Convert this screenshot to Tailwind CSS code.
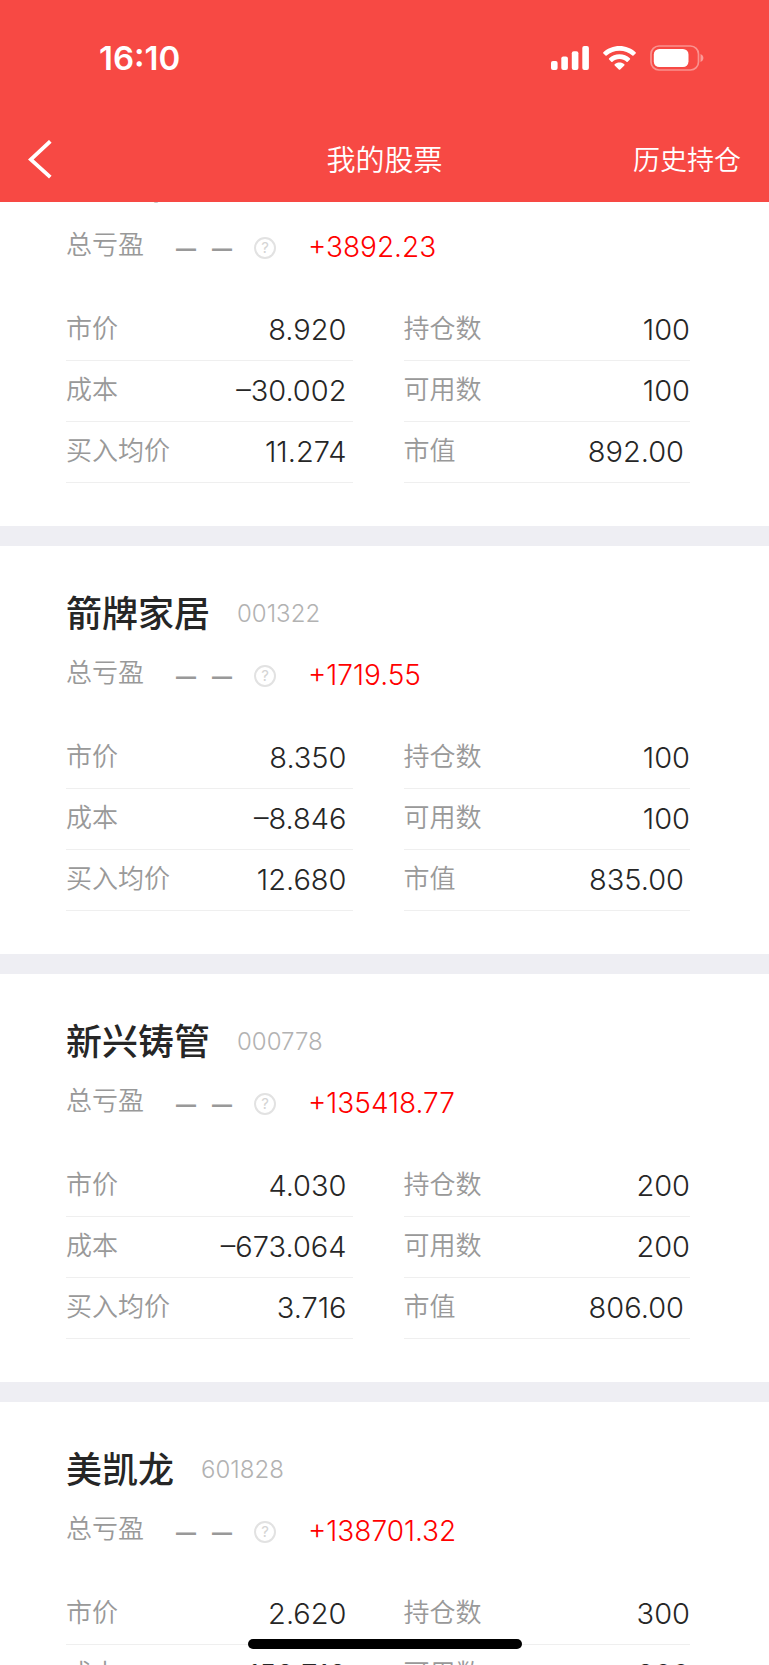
<!DOCTYPE html>
<html lang="zh-CN">
<head>
<meta charset="utf-8">
<meta name="viewport" content="width=device-width, initial-scale=1">
<title>我的股票</title>
<script src="https://cdn.jsdelivr.net/npm/@tailwindcss/browser@4"></script>
</head>
<body class="bg-white font-['Inter','Noto_Sans_CJK_SC',sans-serif] text-[#262626]">
<div class="flex h-screen flex-col overflow-hidden">
  <header class="z-10 shrink-0 bg-[#f74944] text-white">
    <div class="flex h-[116px] items-center justify-between pr-[65px] pl-[99px]">
      <span class="text-[33px] leading-10 font-semibold">16:10</span>
      <div class="flex items-center gap-[14px]">
        <svg class="h-6 w-[38px]" viewBox="0 0 38 24" fill="#fff" aria-label="信号"><rect x="0" y="15" width="6.600" height="9" rx="2"/><rect x="10.300" y="10.500" width="6.600" height="13.500" rx="2"/><rect x="20.800" y="5.200" width="6.600" height="18.800" rx="2"/><rect x="31.300" y="0" width="6.600" height="24" rx="2"/></svg>
        <svg class="h-6 w-[33px]" viewBox="0 0 33 24" fill="#fff" aria-label="无线网络"><path d="M16.500 0C22.700 0 28.300 2.300 32.600 6.200Q33.200 6.900 32.600 7.500L30.500 9.600Q29.900 10.100 29.300 9.600C25.900 6.500 21.400 4.800 16.500 4.800S7.100 6.500 3.700 9.600Q3.100 10.100 2.500 9.600L.4 7.500Q-.2 6.900 .4 6.200C4.700 2.300 10.300 0 16.500 0Z"/><path d="M16.500 8.300C20.500 8.300 24.100 9.800 26.900 12.200Q27.500 12.900 26.900 13.500L24.700 15.700Q24.100 16.200 23.500 15.700C21.600 14 19.200 13 16.500 13S11.400 14 9.500 15.700Q8.900 16.200 8.300 15.700L6.100 13.500Q5.500 12.900 6.100 12.200C8.900 9.800 12.500 8.300 16.500 8.300Z"/><path d="M16.500 16.500C18.400 16.500 20 17.100 21.300 18.200Q21.900 18.800 21.300 19.400L17.200 23.500Q16.500 24.100 15.800 23.500L11.700 19.400Q11.100 18.800 11.700 18.200C13 17.100 14.600 16.500 16.500 16.500Z"/></svg>
        <svg class="h-[26px] w-[54px]" viewBox="0 0 54 26" aria-label="电量"><rect x="1" y="1" width="47.500" height="24" rx="8" fill="none" stroke="#fff" stroke-opacity=".4" stroke-width="1.700"/><rect x="3.800" y="4" width="34.700" height="18" rx="5.500" fill="#fff"/><path d="M50.500 9C52.200 9.700 53.400 11.200 53.400 13S52.200 16.300 50.500 17Z" fill="#fff" fill-opacity=".45"/></svg>
      </div>
    </div>
    <div class="grid h-[86px] grid-cols-[1fr_auto_1fr] items-start pr-7 pl-7">
      <button class="mt-6 h-10 w-6 cursor-pointer" aria-label="返回"><svg class="h-10 w-6" viewBox="0 0 24 40" fill="none" stroke="#fff" stroke-width="3.800"><path d="M22.300 1.300L2.700 19.500L22.300 37.200"/></svg></button>
      <h1 class="mt-[25px] text-[29px] leading-10 font-[350]">我的股票</h1>
      <a href="#history" class="mt-[25px] justify-self-end text-[27px] leading-10 font-[350]">历史持仓</a>
    </div>
  </header>
  <main id="list" class="-mt-[84px] flex shrink-0 flex-col"></main>
</div>
<div class="fixed bottom-4 left-1/2 z-20 h-[10px] w-[274px] -translate-x-1/2 rounded-full bg-black"></div>

<script>
const stocks = [
  ["海南华", "", "+3892.23", "8.920", "–30.002", "11.274", "100", "100", "892.00"],
  ["箭牌家居", "001322", "+1719.55", "8.350", "–8.846", "12.680", "100", "100", "835.00"],
  ["新兴铸管", "000778", "+135418.77", "4.030", "–673.064", "3.716", "200", "200", "806.00"],
  ["美凯龙", "601828", "+138701.32", "2.620", "–158.718", "2.918", "300", "300", "786.00"]
];
const row = (label, value, pad) => `
  <div class="flex h-[61px] items-end justify-between border-b border-[#efefef] pb-[10px]">
    <dt class="pb-[3px] text-[26px] leading-9 font-[350] text-[#999]">${label}</dt>
    <dd class="text-[29px] leading-10 font-light ${pad}">${value}</dd>
  </div>`;
document.getElementById("list").innerHTML = stocks.map(s => `
  <section class="h-[428px] border-b-20 border-[#eeeef3] pr-[79px] pl-[66px]">
    <div class="flex h-24 items-end">
      <h2 class="text-[36px] leading-[56px] font-medium">${s[0]}</h2>
      <span class="pb-2 pl-[27px] text-[24px] leading-10 font-light text-[#b2b2b2]">${s[1]}</span>
    </div>
    <div class="flex h-[86px] items-start pt-[10px]">
      <span class="mt-px w-[110px] text-[26px] leading-10 font-[350] text-[#999]">总亏盈</span>
      <span class="mt-[3px] flex w-[78px] gap-4 font-['Liberation_Sans'] text-[36px] leading-10 text-[#999]"><span>–</span><span>–</span></span>
      <button class="mt-[13px] size-[22px] cursor-pointer rounded-full border-2 border-[#e2e2e2] text-center text-[15px] leading-[18px] text-[#d4d4d4]" aria-label="说明">?</button>
      <span class="mt-[3px] ml-8 text-[28px] leading-10 font-light text-[#ff0000]">${s[2]}</span>
    </div>
    <div class="grid grid-cols-2 gap-x-[51px]">
      <dl>${row("市价", s[3], "pr-[6px]")}${row("成本", s[4], "pr-[6px]")}${row("买入均价", s[5], "pr-[6px]")}</dl>
      <dl>${row("持仓数", s[6], "")}${row("可用数", s[7], "")}${row("市值", s[8], "pr-[6px]")}</dl>
    </div>
  </section>`).join("");
</script>
</body>
</html>
